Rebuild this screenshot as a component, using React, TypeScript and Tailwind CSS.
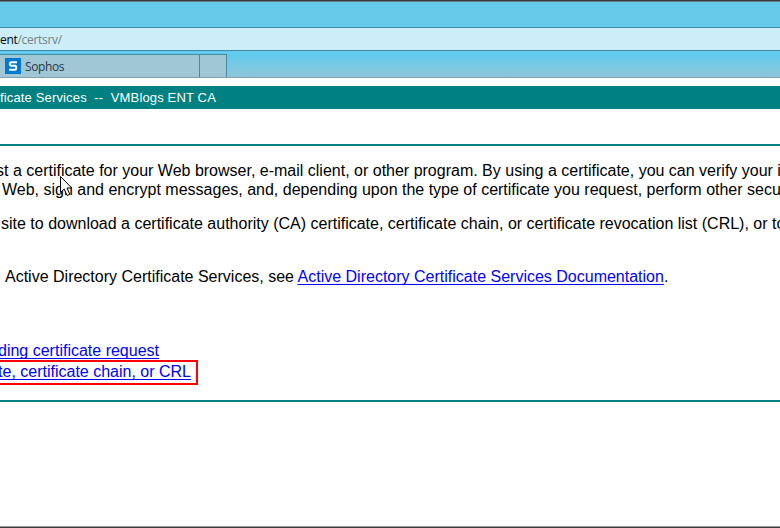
const LINK = "text-[#0000ff] underline decoration-1 underline-offset-2 [text-decoration-skip-ink:none]";

function Cursor() {
  return (
    <svg className="absolute left-[60px] top-[176px]" width="13" height="21" viewBox="0 0 13 21">
      <path
        d="M.5 .5V16.5L4.2 13L7 19.5L9.8 18.3L7 12H11.7Z"
        fill="#fff"
        stroke="#000"
        strokeWidth="1"
      />
    </svg>
  );
}

function SophosIcon() {
  return (
    <svg className="shrink-0" width="16" height="16" viewBox="0 0 16 16">
      <rect width="16" height="16" fill="#0078cf" />
      <path d="M12 4.2H6Q4.8 4.2 4.8 5.8T6 7.8H10Q11.2 7.8 11.2 9.8T10 11.8H4" fill="none" stroke="#fff" strokeWidth="2" />
    </svg>
  );
}

export default function App() {
  return (
    <div className="relative flex h-[528px] w-[780px] flex-col overflow-hidden bg-white font-['Liberation_Sans',Arial,sans-serif] text-[16px] leading-[19px] whitespace-nowrap text-black">
      <div className="h-px shrink-0 bg-[#3b3b3b]" />
      <header className="flex h-[77px] shrink-0 flex-col border-t border-b border-t-[#6b7b82] border-b-[#839eaf] bg-[#66caea] font-['Open_Sans','Noto_Sans',sans-serif] text-[12px]">
        <div className="h-[25px] shrink-0" />
        <div className="flex h-[24px] shrink-0 items-center overflow-hidden border-y border-[#438ba1] bg-[#cbeef8] tracking-[-0.3px] text-[#737f84]">
          <span className="text-black">ent</span>/certsrv/
        </div>
        <div className="flex h-[26px] shrink-0 items-end bg-linear-to-b from-[#62caec] from-20% to-[#8fc5d9]">
          <div className="flex h-[23px] w-[200px] items-center gap-1 border-t border-r border-[#468a9f] bg-[#a0c7d6] pl-[5px] tracking-[-0.4px] text-[#28373f]">
            <SophosIcon />
            <span>Sophos</span>
          </div>
          <div className="h-[23px] w-[27px] border-t border-r border-[#468a9f] bg-[#a0c7d6]" />
        </div>
      </header>
      <div className="mt-2 flex h-[23px] shrink-0 items-center bg-[#008080] text-[13px] tracking-[0.15px] text-white">
        <span className="whitespace-pre">ficate Services  --  VMBlogs ENT CA</span>
      </div>
      <main className="mt-[35px] flex h-[258px] shrink-0 flex-col border-y-2 border-[#008080]">
        <p className="mt-[15px] -ml-[4px]">st a certificate for your Web browser, e-mail client, or other program. By using a certificate, you can verify your i</p>
        <p className="ml-[2px]">Web, sign and encrypt messages, and, depending upon the type of certificate you request, perform other secu</p>
        <p className="mt-[15px] ml-px">site to download a certificate authority (CA) certificate, certificate chain, or certificate revocation list (CRL), or to</p>
        <p className="mt-[34px] ml-[5px]">
          Active Directory Certificate Services, see <a className={LINK}>Active Directory Certificate Services Documentation</a>.
        </p>
        <p className="mt-[55px] flex w-[159px] justify-end"><a className={LINK}>ding certificate request</a></p>
        <div className="flex h-[25px] w-[198px] items-start justify-end border-y-2 border-r-2 border-[#ff0000] pr-[5px]">
          <a className={LINK}>te, certificate chain, or CRL</a>
        </div>
      </main>
      <div className="mt-auto h-[2px] shrink-0 border-t border-[#999] bg-[#3b3b3b]" />
      <Cursor />
    </div>
  );
}
